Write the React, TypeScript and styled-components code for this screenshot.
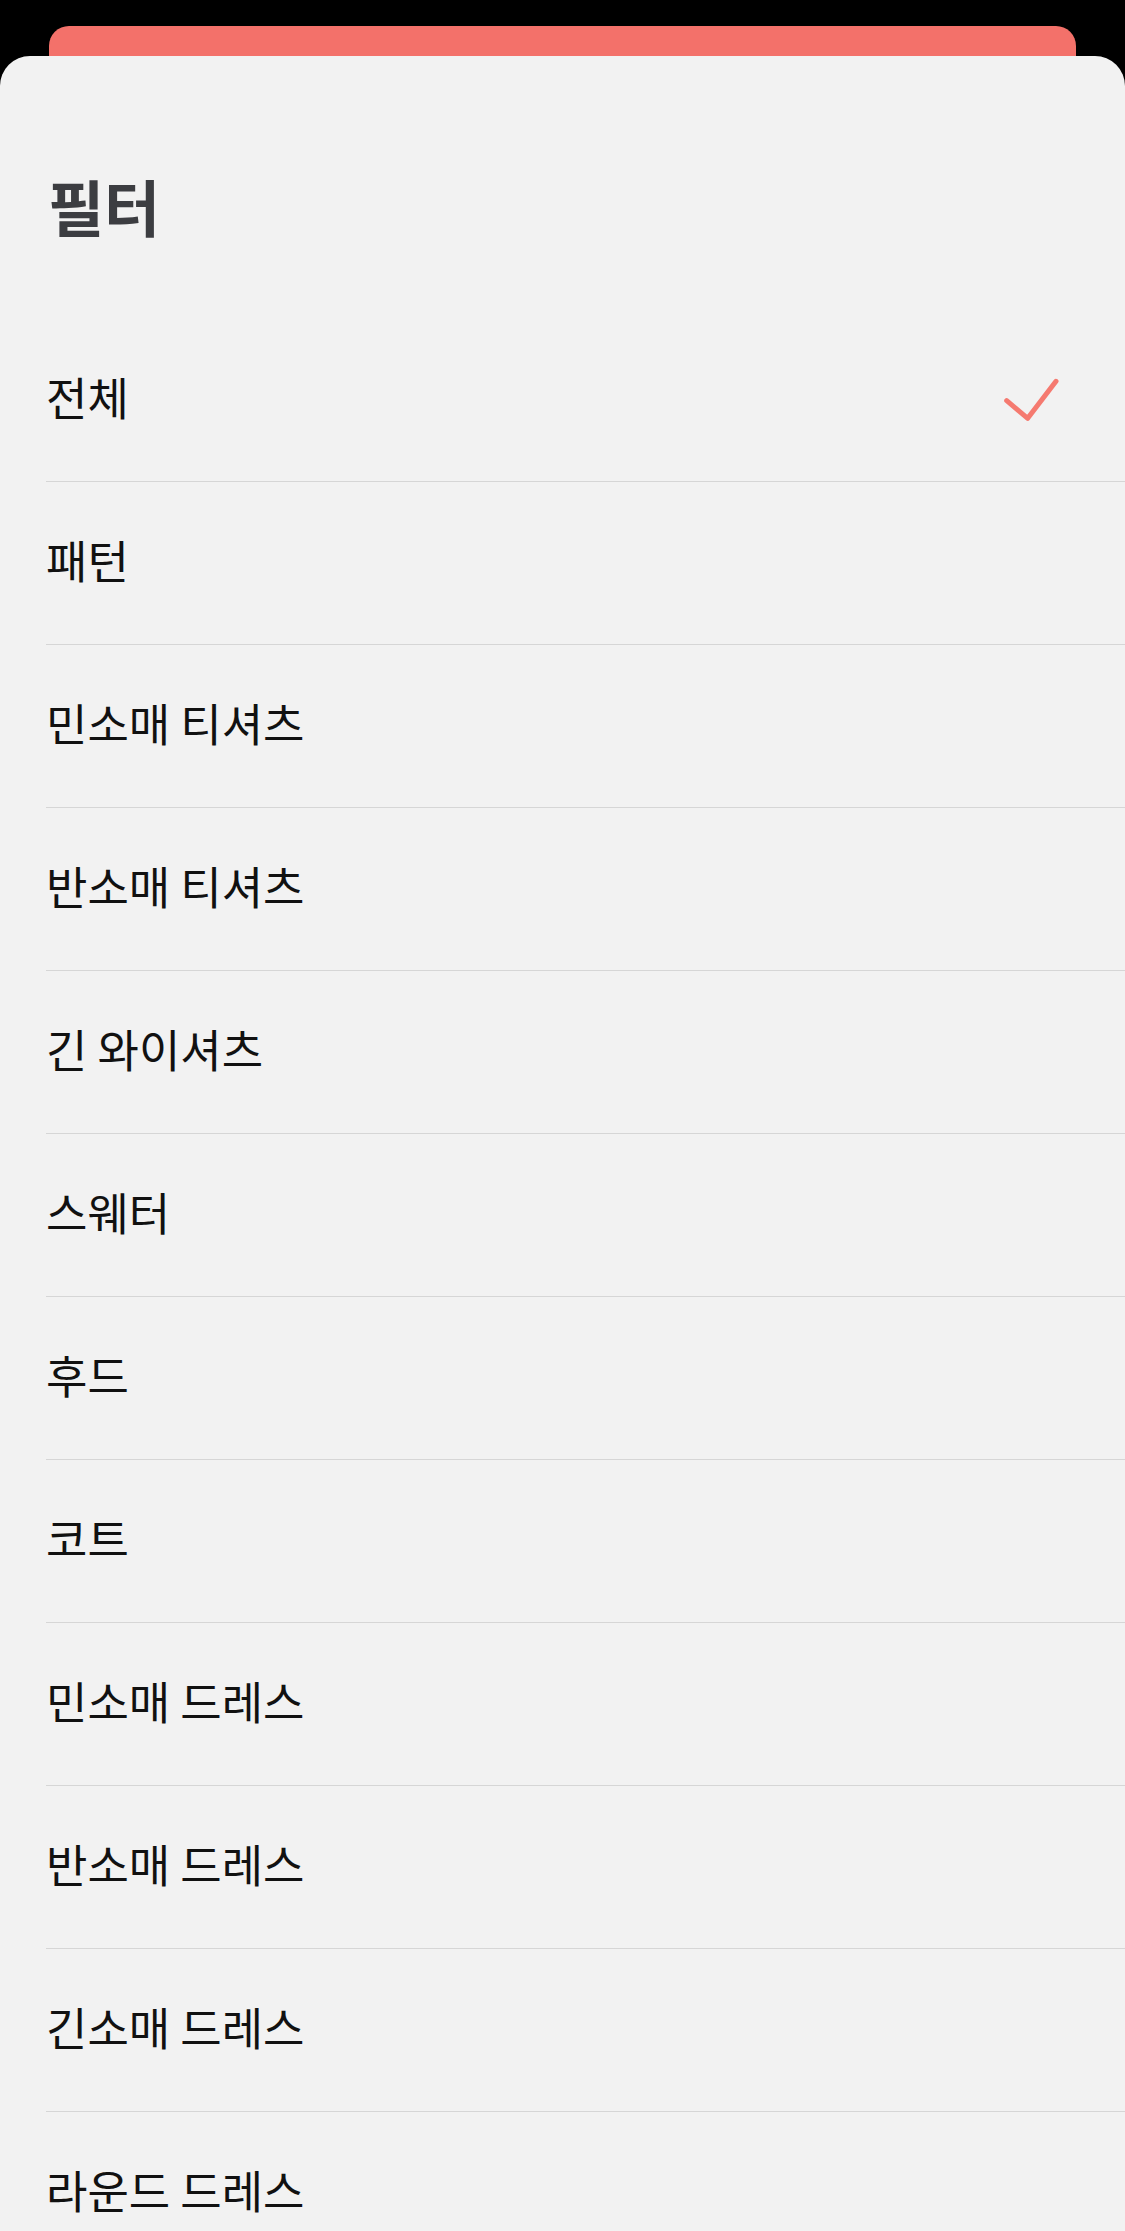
import React from 'react';
import styled, { createGlobalStyle } from 'styled-components';

const GlobalStyle = createGlobalStyle`
  html, body {
    margin: 0;
    padding: 0;
    background-color: #000000;
    overflow: hidden;
  }

  * {
    box-sizing: border-box;
  }
`;

const Page = styled.div`
  height: 100vh;
  padding-top: 26px;
  background-color: #000000;
  font-family: 'Noto Sans CJK KR', 'Noto Sans', sans-serif;
`;

const BackCard = styled.div`
  height: 30px;
  margin: 0 49px;
  border-radius: 20px 20px 0 0;
  background-color: #f3716a;
`;

const Sheet = styled.section`
  min-height: 100%;
  border-radius: 30px 30px 0 0;
  background-color: #f2f2f2;
`;

const Header = styled.header`
  height: 263px;
  padding: 114px 48px 0;
`;

const Title = styled.h1`
  margin: 0;
  font-size: 61px;
  line-height: 72px;
  font-weight: 700;
  color: #3c3d41;
`;

const List = styled.ul`
  margin: 0;
  padding: 0;
  list-style: none;
`;

const Row = styled.li`
  height: 163px;
  margin-left: 46px;
  padding-right: 65px;
  padding-bottom: 8px;
  border-bottom: 1px solid #d6d6d6;

  display: flex;
  align-items: center;
  justify-content: space-between;
`;

const Label = styled.span`
  font-size: 45px;
  color: #111111;
`;

const CheckSvg = styled.svg`
  width: 58px;
  height: 46px;
  margin-top: 8px;
  flex-shrink: 0;
`;

const CheckIcon = () => (
  <CheckSvg viewBox="0 0 58 46" fill="none">
    <polyline
      points="4.7,23.7 25.7,41.3 54,4.3"
      stroke="#f57a70"
      strokeWidth="5"
      strokeLinecap="round"
      strokeLinejoin="round"
    />
  </CheckSvg>
);

const filters = [
  '전체',
  '패턴',
  '민소매 티셔츠',
  '반소매 티셔츠',
  '긴 와이셔츠',
  '스웨터',
  '후드',
  '코트',
  '민소매 드레스',
  '반소매 드레스',
  '긴소매 드레스',
  '라운드 드레스',
];

const App: React.FC = () => {
  const selected = '전체';

  return (
    <>
      <GlobalStyle />
      <Page>
        <BackCard />
        <Sheet>
          <Header>
            <Title>필터</Title>
          </Header>
          <List>
            {filters.map((name) => (
              <Row key={name}>
                <Label>{name}</Label>
                {name === selected && <CheckIcon />}
              </Row>
            ))}
          </List>
        </Sheet>
      </Page>
    </>
  );
};

export default App;
